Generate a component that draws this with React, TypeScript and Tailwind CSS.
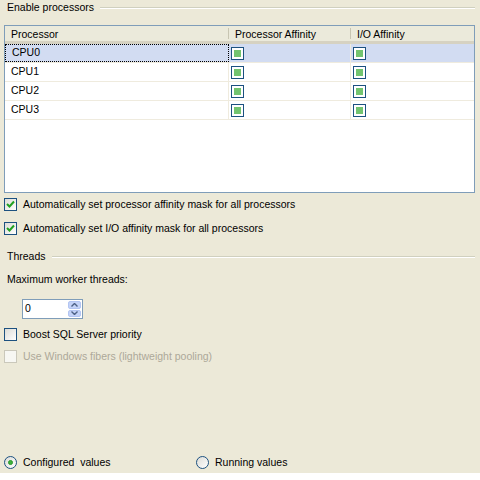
import React from "react";

const rows = ["CPU0", "CPU1", "CPU2", "CPU3"];

function GridCheck() {
  return (
    <span className="block w-[13px] h-[13px] border border-[#1C5180] bg-white p-[2px]">
      <span className="block w-full h-full bg-[#73C46F]" />
    </span>
  );
}

function Check({ checked, disabled }: { checked?: boolean; disabled?: boolean }) {
  return (
    <span
      className={`flex items-center justify-center w-[13px] h-[13px] border ${
        disabled ? "border-[#CAC8BB] bg-[#F7F7F3]" : "border-[#1C5180] bg-gradient-to-br from-[#DCDCD7] to-[#FFFFFF]"
      }`}
    >
      {checked && (
        <svg width="9" height="9" viewBox="0 0 9 9">
          <path d="M1 4 L3.5 6.5 L8 1.5" fill="none" stroke="#21A121" strokeWidth="2" />
        </svg>
      )}
    </span>
  );
}

function Radio({ checked }: { checked?: boolean }) {
  return (
    <span className="flex items-center justify-center w-[13px] h-[13px] rounded-full border border-[#1C5180] bg-gradient-to-br from-[#DCDCD7] to-[#FFFFFF]">
      {checked && <span className="block w-[5px] h-[5px] rounded-full bg-[#3DB03D] border border-[#2A9A2A]" />}
    </span>
  );
}

function GroupTitle({ title }: { title: string }) {
  return (
    <div className="flex items-center h-[16px] pl-[7px] pr-[5px]">
      <span>{title}</span>
      <span className="flex-1 ml-[6px] h-[2px] border-t border-[#D0D0BF] border-b border-b-white" />
    </div>
  );
}

export default function App() {
  return (
    <div className="w-[480px] h-[480px] bg-white text-[10.5px] text-black" style={{ fontFamily: '"Liberation Sans", Arial, sans-serif' }}>
      <div className="h-[473px] bg-[#ECE9D8]">
        <GroupTitle title="Enable processors" />

        {/* processor list */}
        <div className="ml-[4px] mt-[9px] w-[471px] h-[168px] border border-[#7F9DB9] bg-white">
          <div className="flex h-[18px] bg-[#EBEADB] border-b-[3px] border-[#D6D2C2]">
            <div className="w-[224px] flex items-center pl-[6px] pt-[2px] border-r border-[#C7C5B2] my-[2px]">Processor</div>
            <div className="w-[122px] flex items-center pl-[6px] pt-[2px] border-r border-[#C7C5B2] my-[2px]">Processor Affinity</div>
            <div className="flex-1 flex items-center pl-[6px] pt-[2px]">I/O Affinity</div>
          </div>
          {rows.map((cpu, i) => (
            <div key={cpu} className={`flex h-[19px] border-b border-[#EFEBDE] ${i === 0 ? "bg-[#D2DCF2]" : ""}`}>
              <div
                className={`w-[224px] flex items-center pl-[6px] ${
                  i === 0 ? "border border-dotted border-black" : "border-r border-[#EFEBDE]"
                }`}
              >
                {cpu}
              </div>
              <div className="w-[122px] flex items-center pl-[2px] border-r border-[#EFEBDE]">
                <GridCheck />
              </div>
              <div className="flex-1 flex items-center pl-[2px]">
                <GridCheck />
              </div>
            </div>
          ))}
        </div>

        <div className="flex flex-col pl-[4px] mt-[5px]">
          <label className="flex items-center gap-[6px] h-[13px]">
            <Check checked />
            <span>Automatically set processor affinity mask for all processors</span>
          </label>
          <label className="flex items-center gap-[6px] h-[13px] mt-[11px]">
            <Check checked />
            <span>Automatically set I/O affinity mask for all processors</span>
          </label>
        </div>

        <div className="mt-[14px]">
          <GroupTitle title="Threads" />
        </div>

        <div className="pl-[7px] mt-[8px] h-[14px] flex items-center">Maximum worker threads:</div>

        <div className="ml-[22px] mt-[12px] w-[61px] h-[20px] border border-[#7F9DB9] bg-white flex">
          <span className="flex-1 flex items-center pl-[2px]">0</span>
          <span className="w-[15px] flex flex-col gap-[1px] p-[1px]">
            <span className="flex-1 flex items-center justify-center rounded-[2px] bg-[#C4D3F8] border border-[#B3C5F2]">
              <svg width="7" height="4" viewBox="0 0 7 4"><path d="M0.5 3.5 L3.5 0.5 L6.5 3.5" fill="none" stroke="#4D6185" strokeWidth="1.4" /></svg>
            </span>
            <span className="flex-1 flex items-center justify-center rounded-[2px] bg-[#C4D3F8] border border-[#B3C5F2]">
              <svg width="7" height="4" viewBox="0 0 7 4"><path d="M0.5 0.5 L3.5 3.5 L6.5 0.5" fill="none" stroke="#4D6185" strokeWidth="1.4" /></svg>
            </span>
          </span>
        </div>

        <div className="flex flex-col pl-[4px] mt-[9px]">
          <label className="flex items-center gap-[6px] h-[13px]">
            <Check />
            <span>Boost SQL Server priority</span>
          </label>
          <label className="flex items-center gap-[6px] h-[13px] mt-[9px] text-[#ACA899]">
            <Check disabled />
            <span>Use Windows fibers (lightweight pooling)</span>
          </label>
        </div>

        <div className="flex items-center pl-[4px] mt-[93px] h-[13px]">
          <label className="flex items-center gap-[6px] w-[192px]">
            <Radio checked />
            <span>Configured&nbsp; values</span>
          </label>
          <label className="flex items-center gap-[6px]">
            <Radio />
            <span>Running values</span>
          </label>
        </div>
      </div>
    </div>
  );
}
